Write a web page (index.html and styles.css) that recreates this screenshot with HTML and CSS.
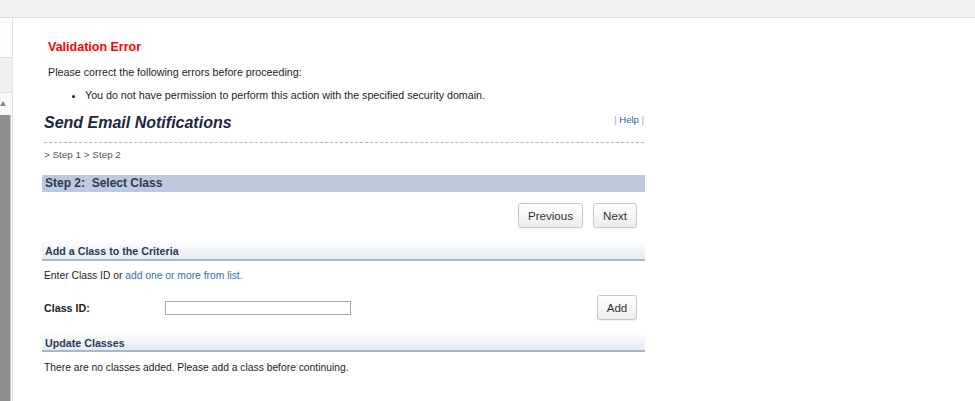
FILE: index.html
```html
<!DOCTYPE html>
<html>
<head>
<meta charset="utf-8">
<link rel="stylesheet" href="styles.css">
</head>
<body>
<div class="topbar"></div>
<div class="layout">
  <div class="sidebar">
    <div class="sb-top"></div>
    <div class="sb-band"></div>
    <div class="sb-arrow"><span class="tri"></span></div>
    <div class="sb-thumb"></div>
  </div>
  <div class="main">
    <div class="error">
      <h2 class="error-title">Validation Error</h2>
      <p class="error-text">Please correct the following errors before proceeding:</p>
      <ul class="error-list">
        <li>You do not have permission to perform this action with the specified security domain.</li>
      </ul>
    </div>
    <div class="page-head">
      <h1 class="page-title">Send Email Notifications</h1>
      <div class="help"><span class="pipe">|</span> <a class="help-link">Help</a> <span class="pipe">|</span></div>
    </div>
    <div class="crumbs">&gt; Step 1 &gt; Step 2</div>
    <div class="step-bar">Step 2:&nbsp; Select Class</div>
    <div class="nav-buttons">
      <button class="btn btn-prev">Previous</button>
      <button class="btn btn-next">Next</button>
    </div>
    <div class="section-head">Add a Class to the Criteria</div>
    <p class="line">Enter Class ID or <a class="link">add one or more from list.</a></p>
    <div class="class-row">
      <label class="class-label">Class ID:</label>
      <input class="class-input" type="text">
      <button class="btn btn-add">Add</button>
    </div>
    <div class="section-head section-head-2">Update Classes</div>
    <p class="line line-empty">There are no classes added. Please add a class before continuing.</p>
  </div>
</div>
</body>
</html>
```

FILE: styles.css
```css
html, body {
  margin: 0;
  padding: 0;
  background: #ffffff;
  font-family: "Liberation Sans", Arial, sans-serif;
  color: #1e1e1e;
  height: 401px;
  overflow: hidden;
}

.topbar {
  height: 17px;
  background: #f1f1f1;
  border-bottom: 1px solid #dcdcdc;
}

.layout {
  display: flex;
  height: 383px;
}

.sidebar {
  width: 12px;
  border-right: 1px solid #e2e2e2;
  display: flex;
  flex-direction: column;
  background: #fafafa;
}

.sb-top {
  height: 39px;
  background: #fdfdfd;
}

.sb-band {
  height: 34px;
  background: #f0f0f0;
  border-top: 1px solid #dcdcdc;
  border-bottom: 1px solid #dcdcdc;
}

.sb-arrow {
  height: 22px;
  position: relative;
  background: #f9f9f9;
}

.tri {
  position: absolute;
  left: 0;
  top: 8px;
  width: 0;
  height: 0;
  border-left: 3px solid transparent;
  border-right: 3px solid transparent;
  border-bottom: 5px solid #8a8a8a;
}

.sb-thumb {
  flex: 1;
  width: 10px;
  background: #8f8f8f;
  border-right: 1px solid #c8c8c8;
}

.main {
  padding-left: 29px;
  padding-top: 21px;
  width: 603px;
}

.error {
  padding-left: 6px;
}

.error-title {
  margin: 0;
  font-size: 12.5px;
  line-height: 16px;
  font-weight: bold;
  color: #ff0000;
}

.error-text {
  margin: 10px 0 0 0;
  font-size: 10.7px;
  line-height: 14px;
  color: #1e1e1e;
}

.error-list {
  margin: 9px 0 0 0;
  padding-left: 37px;
  font-size: 10.7px;
  line-height: 14px;
}

.page-head {
  margin-top: 11px;
  margin-left: 2px;
  width: 600px;
  display: flex;
  justify-content: space-between;
  align-items: flex-start;
  padding-bottom: 9px;
  border-bottom: 1px dashed #a9b8d2;
}

.page-title {
  margin: 0;
  font-size: 16px;
  line-height: 20px;
  font-weight: bold;
  font-style: italic;
  color: #1c2840;
}

.help {
  font-size: 9.5px;
  line-height: 12px;
  margin-top: 1px;
  color: #9aa6ba;
}

.help-link {
  color: #2c5fa8;
}

.crumbs {
  margin-top: 6px;
  margin-left: 2px;
  font-size: 9.9px;
  line-height: 12px;
  color: #555555;
}

.step-bar {
  margin-top: 14px;
  height: 17px;
  line-height: 17px;
  background: #bdcadb;
  padding-left: 3px;
  font-size: 12px;
  font-weight: bold;
  color: #2a3a56;
}

.nav-buttons {
  margin-top: 11px;
  display: flex;
  justify-content: flex-end;
  gap: 10px;
  padding-right: 8px;
}

.btn {
  height: 25px;
  border: 1px solid #c9c9c9;
  border-radius: 3px;
  background: linear-gradient(#ffffff, #ececec);
  font-family: "Liberation Sans", Arial, sans-serif;
  font-size: 11.6px;
  color: #333333;
  padding: 0;
  box-shadow: 0 1px 1px rgba(0, 0, 0, 0.06);
}

.btn-prev { width: 65px; }
.btn-next { width: 44px; }
.btn-add { width: 40px; margin-left: auto; margin-right: 8px; }

.section-head {
  margin-top: 12px;
  height: 17px;
  padding-top: 2px;
  line-height: 19px;
  padding-left: 3px;
  background: linear-gradient(#ffffff, #e6ebf2);
  border-bottom: 2px solid #a8b7cc;
  font-size: 10.7px;
  font-weight: bold;
  color: #2b3b57;
}

.section-head-2 {
  height: 16px;
  line-height: 18px;
}

.line {
  margin: 8px 0 0 2px;
  font-size: 10.3px;
  line-height: 14px;
  color: #1e1e1e;
}

.link {
  color: #2f6cbc;
}

.line-empty {
  margin-top: 9px;
}

.class-row {
  margin-top: 12px;
  display: flex;
  align-items: center;
  padding-left: 2px;
}

.class-label {
  width: 121px;
  font-size: 10.7px;
  font-weight: bold;
  color: #1e1e1e;
}

.class-input {
  width: 186px;
  height: 14px;
  box-sizing: border-box;
  border: 1px solid #a8a8a8;
  padding: 0;
  margin: 0;
  background: #ffffff;
}
```
